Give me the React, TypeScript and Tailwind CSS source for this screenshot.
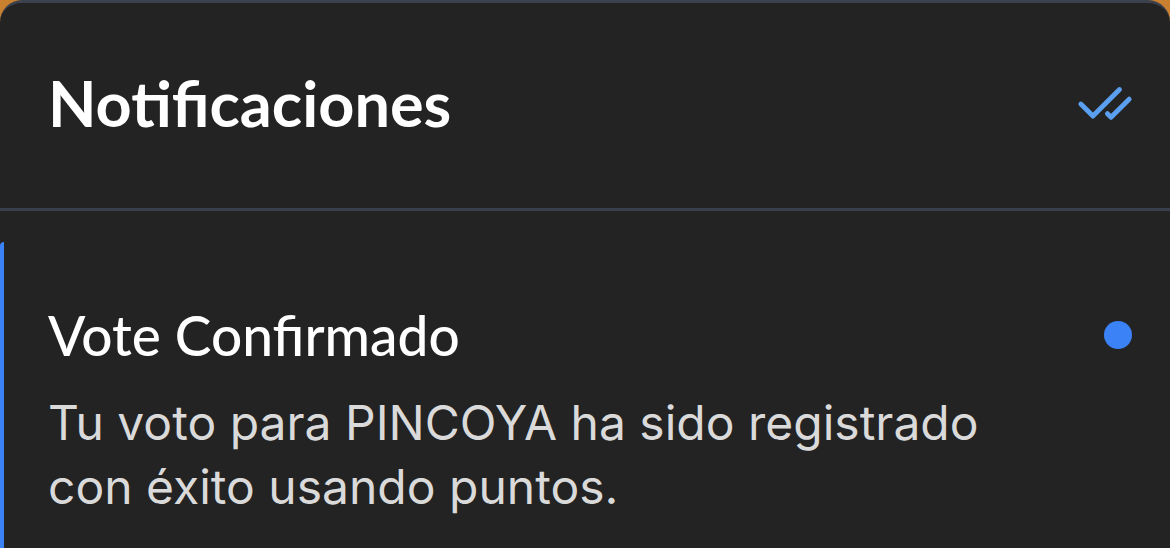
import React from 'react';
import { CheckCheck } from 'lucide-react';

const notifications = [
  {
    id: 'n1',
    title: 'Vote Confirmado',
    body: 'Tu voto para PINCOYA ha sido registrado con éxito usando puntos.',
    unread: true,
  },
];

const App: React.FC = () => {
  return (
    <div className="w-[1170px] h-[548px] overflow-hidden bg-[#c9802f]">
      <div className="h-full bg-[#232323] rounded-t-[22px] border-t-[3px] border-[#3b414f] flex flex-col">
        {/* Header */}
        <div className="h-[208px] shrink-0 flex items-center justify-between pl-[48px] pr-[36px] border-b-[3px] border-[#3a404e]">
          <h2
            className="text-[63px] font-bold text-white leading-none -mt-[6px]"
            style={{ fontFamily: 'Lato, "Noto Sans", sans-serif' }}
          >
            Notificaciones
          </h2>
          <button className="text-[#5b9ff0] -mt-[4px]">
            <CheckCheck size={58} strokeWidth={2} />
          </button>
        </div>

        {/* List */}
        <div className="pt-[31px]">
          {notifications.map((n) => (
            <div
              key={n.id}
              className="relative pl-[48px] pr-[38px] pt-[55px] pb-10"
            >
              <div className="absolute left-0 top-0 bottom-0 w-[4px] rounded-tl-[4px] bg-[#3b82f6]" />
              <div className="flex items-center justify-between">
                <h3
                  className="text-[55px] font-medium text-white leading-[76px]"
                  style={{ fontFamily: 'Lato, "Noto Sans", sans-serif' }}
                >
                  {n.title}
                </h3>
                {n.unread && <span className="w-[28px] h-[28px] rounded-full bg-[#3b82f6]" />}
              </div>
              <p
                className="mt-[18px] max-w-[1000px] text-[48px] leading-[64px] text-[#dadada]"
                style={{ fontFamily: 'Inter, "Noto Sans", sans-serif' }}
              >
                {n.body}
              </p>
            </div>
          ))}
        </div>
      </div>
    </div>
  );
};

export default App;
